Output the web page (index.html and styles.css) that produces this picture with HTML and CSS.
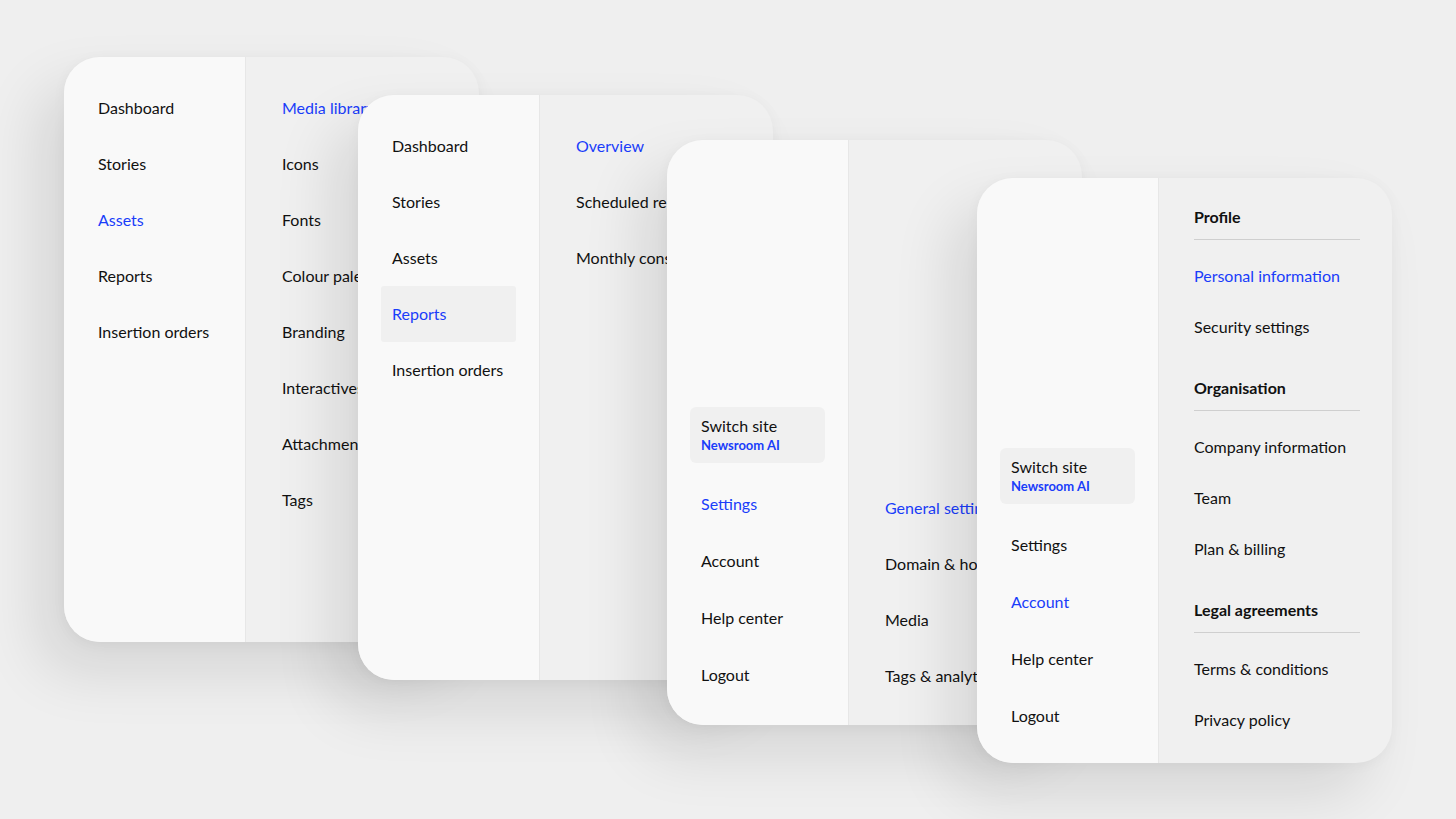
FILE: index.html
```html
<!DOCTYPE html>
<html lang="en">
<head>
    <meta charset="UTF-8">
    <meta name="viewport" content="width=device-width, initial-scale=1.0">
    <title>Navigation menus</title>
    <link rel="stylesheet" href="styles.css">
</head>
<body>
    <div class="stage">

        <!-- Assets menu -->
        <div class="card card-assets">
            <ul class="sidebar">
                <li class="nav-item">Dashboard</li>
                <li class="nav-item">Stories</li>
                <li class="nav-item active">Assets</li>
                <li class="nav-item">Reports</li>
                <li class="nav-item">Insertion orders</li>
            </ul>
            <ul class="panel">
                <li class="sub-item active">Media library</li>
                <li class="sub-item">Icons</li>
                <li class="sub-item">Fonts</li>
                <li class="sub-item">Colour palettes</li>
                <li class="sub-item">Branding</li>
                <li class="sub-item">Interactives</li>
                <li class="sub-item">Attachments</li>
                <li class="sub-item">Tags</li>
            </ul>
        </div>

        <!-- Reports menu -->
        <div class="card card-reports">
            <ul class="sidebar">
                <li class="nav-item">Dashboard</li>
                <li class="nav-item">Stories</li>
                <li class="nav-item">Assets</li>
                <li class="nav-item active selected">Reports</li>
                <li class="nav-item">Insertion orders</li>
            </ul>
            <ul class="panel">
                <li class="sub-item active">Overview</li>
                <li class="sub-item">Scheduled reports</li>
                <li class="sub-item">Monthly consumption</li>
            </ul>
        </div>

        <!-- Settings menu -->
        <div class="card card-settings">
            <ul class="sidebar bottom">
                <li class="switch-site">
                    <span class="switch-label">Switch site</span>
                    <span class="switch-name">Newsroom AI</span>
                </li>
                <li class="nav-item tall active">Settings</li>
                <li class="nav-item tall">Account</li>
                <li class="nav-item tall">Help center</li>
                <li class="nav-item tall">Logout</li>
            </ul>
            <ul class="panel bottom">
                <li class="sub-item active">General settings</li>
                <li class="sub-item">Domain &amp; hosting</li>
                <li class="sub-item">Media</li>
                <li class="sub-item">Tags &amp; analytics</li>
            </ul>
        </div>

        <!-- Account menu -->
        <div class="card card-account">
            <ul class="sidebar bottom">
                <li class="switch-site">
                    <span class="switch-label">Switch site</span>
                    <span class="switch-name">Newsroom AI</span>
                </li>
                <li class="nav-item tall">Settings</li>
                <li class="nav-item tall active">Account</li>
                <li class="nav-item tall">Help center</li>
                <li class="nav-item tall">Logout</li>
            </ul>
            <div class="panel grouped">
                <div class="section">
                    <h3 class="section-title">Profile</h3>
                    <ul class="section-list">
                        <li class="sub-item short active">Personal information</li>
                        <li class="sub-item short">Security settings</li>
                    </ul>
                </div>
                <div class="section">
                    <h3 class="section-title">Organisation</h3>
                    <ul class="section-list">
                        <li class="sub-item short">Company information</li>
                        <li class="sub-item short">Team</li>
                        <li class="sub-item short">Plan &amp; billing</li>
                    </ul>
                </div>
                <div class="section">
                    <h3 class="section-title">Legal agreements</h3>
                    <ul class="section-list">
                        <li class="sub-item short">Terms &amp; conditions</li>
                        <li class="sub-item short">Privacy policy</li>
                    </ul>
                </div>
            </div>
        </div>

    </div>
</body>
</html>
```

FILE: styles.css
```css
body {
    margin: 0;
    padding: 0;
    background: #efefef;
    font-family: 'Lato', 'Liberation Sans', sans-serif;
    color: #111;
    overflow: hidden;
}
ul {
    list-style: none;
    margin: 0;
    padding: 0;
}
.stage {
    position: relative;
    width: 1456px;
    height: 819px;
}

/* cards sit on a free canvas, overlapping */
.card {
    position: absolute;
    width: 415px;
    height: 585px;
    display: flex;
    border-radius: 36px;
    overflow: hidden;
    background: #f0f0f0;
    box-shadow: -26px 30px 60px rgba(0, 0, 0, 0.11), 0 2px 14px rgba(0, 0, 0, 0.04);
}
.card-assets { left: 64px; top: 57px; }
.card-reports { left: 358px; top: 95px; }
.card-settings { left: 667px; top: 140px; }
.card-account { left: 977px; top: 178px; }

.sidebar {
    width: 182px;
    flex-shrink: 0;
    box-sizing: border-box;
    padding: 23px 23px 20px;
    background: #f9f9f9;
    border-right: 1px solid #e7e7e7;
    display: flex;
    flex-direction: column;
}
.card-settings .sidebar {
    padding-bottom: 22px;
}
.card-account .sidebar {
    padding-bottom: 19px;
}
.panel {
    flex: 1;
    padding: 23px 20px 21px 36px;
    display: flex;
    flex-direction: column;
    white-space: nowrap;
}
.bottom {
    justify-content: flex-end;
}

.nav-item {
    height: 56px;
    line-height: 56px;
    padding-left: 11px;
    font-size: 16px;
    border-radius: 3px;
    white-space: nowrap;
}
.nav-item.tall {
    height: 57px;
    line-height: 57px;
}
.nav-item.selected {
    background: #f0f0f0;
}
.active {
    color: #1a3dfa;
}

.switch-site {
    display: flex;
    flex-direction: column;
    height: 56px;
    box-sizing: border-box;
    padding: 9px 11px 0;
    margin-bottom: 12px;
    background: #f0f0f0;
    border-radius: 6px;
}
.switch-label {
    font-size: 16px;
    line-height: 20px;
}
.switch-name {
    font-size: 13px;
    line-height: 18px;
    font-weight: 700;
    color: #1a3dfa;
}

.sub-item {
    height: 56px;
    line-height: 56px;
    font-size: 16px;
}
.sub-item.short {
    height: 51px;
    line-height: 51px;
}

.grouped {
    padding: 29px 32px 0 35px;
}
.section + .section {
    margin-top: 26px;
}
.section-title {
    margin: 0;
    font-size: 16px;
    font-weight: 700;
    line-height: 20px;
    padding-bottom: 12px;
    border-bottom: 1px solid #cfcfcf;
}
.section-list {
    padding-top: 10px;
}
```
